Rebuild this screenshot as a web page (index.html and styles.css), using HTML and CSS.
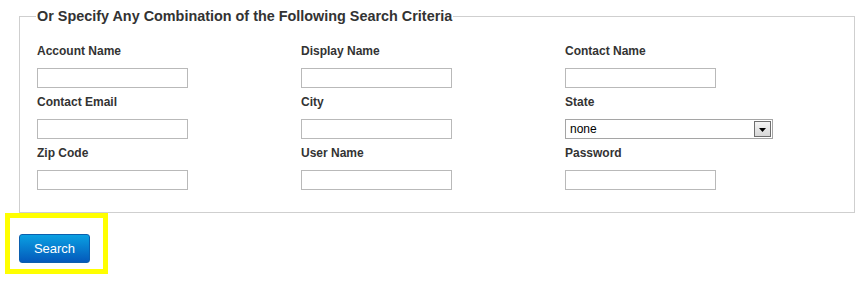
FILE: index.html
```html
<!DOCTYPE html>
<html>
<head>
<meta charset="utf-8">
<link rel="stylesheet" href="styles.css">
</head>
<body>
<form class="search-form">
  <fieldset class="criteria">
    <legend class="criteria-title">Or Specify Any Combination of the Following Search Criteria</legend>
    <div class="grid">
      <div class="field"><label class="lbl">Account Name</label><input class="txt" type="text"></div>
      <div class="field"><label class="lbl">Display Name</label><input class="txt" type="text"></div>
      <div class="field"><label class="lbl">Contact Name</label><input class="txt" type="text"></div>
      <div class="field"><label class="lbl">Contact Email</label><input class="txt" type="text"></div>
      <div class="field"><label class="lbl">City</label><input class="txt" type="text"></div>
      <div class="field"><label class="lbl">State</label>
        <div class="select-box">
          <select class="sel"><option>none</option></select>
          <span class="sel-btn"><svg width="7" height="4" viewBox="0 0 7 4"><path d="M0 0H7L3.5 4Z" fill="#000"/></svg></span>
        </div>
      </div>
      <div class="field"><label class="lbl">Zip Code</label><input class="txt" type="text"></div>
      <div class="field"><label class="lbl">User Name</label><input class="txt" type="text"></div>
      <div class="field"><label class="lbl">Password</label><input class="txt" type="password"></div>
    </div>
  </fieldset>
  <div class="highlight">
    <button class="btn" type="button">Search</button>
  </div>
</form>
</body>
</html>
```
FILE: styles.css
```css
html, body {
  margin: 0;
  padding: 0;
  background: #fff;
}
body {
  font-family: "Liberation Sans", Arial, sans-serif;
  color: #333;
}
.search-form {
  padding-top: 8px;
}
.criteria {
  margin: 0 11px 0 19px;
  border: 1px solid #cfcfcf;
  padding: 4px 16px 22px 17px;
}
.criteria-title {
  font-size: 14.4px;
  font-weight: bold;
  line-height: 16px;
  padding: 0 1px;
  margin-left: -1px;
  color: #333;
}
.grid {
  display: grid;
  grid-template-columns: 264px 264px 1fr;
  row-gap: 6px;
  margin-top: 15px;
}
.field {
  display: flex;
  flex-direction: column;
  align-items: flex-start;
}
.lbl {
  font-size: 12px;
  font-weight: bold;
  line-height: 16px;
  margin-bottom: 9px;
  color: #333;
}
.txt {
  box-sizing: border-box;
  width: 151px;
  height: 20px;
  margin: 0;
  padding: 1px 3px;
  border: 1px solid #b9b9b9;
  background: #fff;
  font-family: "Liberation Sans", Arial, sans-serif;
  font-size: 12px;
}
.select-box {
  box-sizing: border-box;
  width: 208px;
  height: 20px;
  border: 1px solid #a5a5a5;
  display: flex;
  align-items: stretch;
  padding: 1px;
  background: #fff;
}
.sel {
  appearance: none;
  -webkit-appearance: none;
  flex: 1;
  border: 0;
  margin: 0;
  padding: 0 0 0 3px;
  background: transparent;
  font-family: "Liberation Sans", Arial, sans-serif;
  font-size: 12px;
  color: #000;
  outline: none;
}
.sel-btn {
  box-sizing: border-box;
  width: 17px;
  border: 1px solid #6f6f6f;
  background: linear-gradient(#f4f4f4, #d8d8d8);
  display: flex;
  align-items: center;
  justify-content: center;
  padding-top: 1px;
}
.highlight {
  width: fit-content;
  margin-left: 5px;
  border: 5px solid #ffff00;
  padding: 16px 13px 6px 9px;
}
.btn {
  display: block;
  box-sizing: border-box;
  width: 71px;
  height: 29px;
  margin: 0;
  border: 1px solid #0b5fae;
  border-radius: 3px;
  background: linear-gradient(#0aa0e2, #0459bb);
  color: #fff;
  font-family: "Liberation Sans", Arial, sans-serif;
  font-size: 13px;
  padding: 0;
}
```
